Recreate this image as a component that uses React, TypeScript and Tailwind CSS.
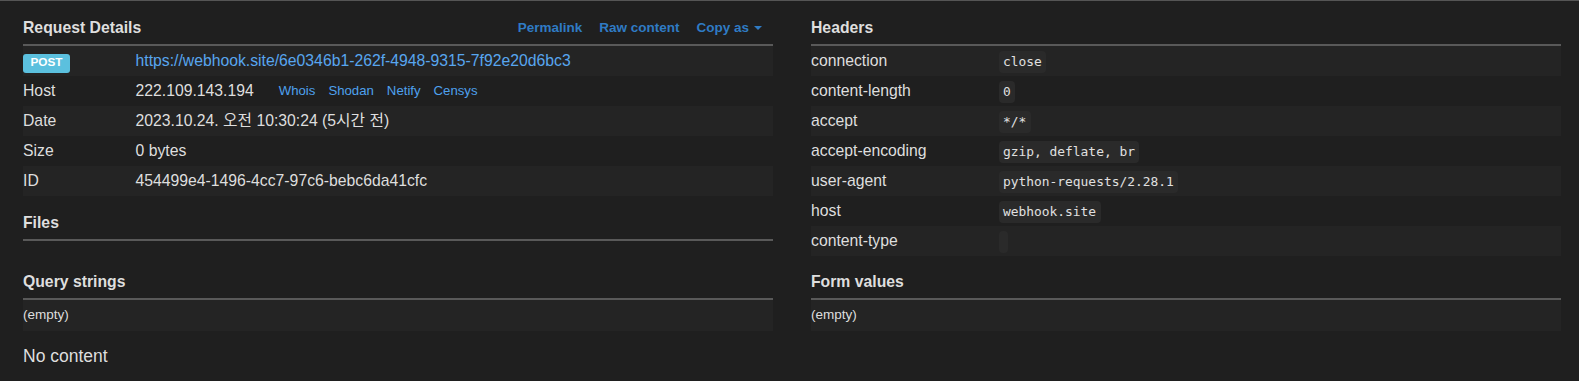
import React from "react";

const sans = { fontFamily: '"Liberation Sans", Arial, "Noto Sans CJK KR", sans-serif' };

interface Row {
  label: React.ReactNode;
  value: React.ReactNode;
}

function SectionHeading({ title, right }: { title: string; right?: React.ReactNode }) {
  return (
    <div className="flex items-start justify-between h-[45px] pt-[18px] border-b-2 border-[#595959]">
      <h3 className="text-[15.75px] leading-[18px] font-bold text-[#dedede]">{title}</h3>
      {right}
    </div>
  );
}

function DataTable({ rows, labelWidth }: { rows: Row[]; labelWidth: string }) {
  return (
    <div className="flex flex-col">
      {rows.map((r, i) => (
        <div
          key={i}
          className={`flex items-center h-[30px] text-[15.75px] text-[#dedede] ${i % 2 === 0 ? "bg-[#242424]" : ""}`}
        >
          <div className={`${labelWidth} shrink-0`}>{r.label}</div>
          <div className="flex items-center min-w-0">{r.value}</div>
        </div>
      ))}
    </div>
  );
}

function Code({ children }: { children?: React.ReactNode }) {
  return (
    <code
      className="inline-block h-[22px] leading-[22px] px-[4.5px] mt-[2px] rounded-[4px] bg-[#2a2a2a] text-[12.9px] text-[#e0e0e0]"
      style={{ fontFamily: '"DejaVu Sans Mono", "Liberation Mono", monospace' }}
    >
      {children}
    </code>
  );
}

function EmptyRow() {
  return (
    <div className="flex items-center h-[31px] bg-[#242424] text-[13.5px] text-[#dedede]">(empty)</div>
  );
}

export default function App() {
  const requestRows: Row[] = [
    {
      label: (
        <span className="inline-flex items-center justify-center w-[47px] h-[19px] mt-[3px] rounded-[3px] bg-[#5bc0de] text-white text-[11.8px] font-bold">
          POST
        </span>
      ),
      value: (
        <a className="text-[#58a6ef]" href="#">
          https://webhook.site/6e0346b1-262f-4948-9315-7f92e20d6bc3
        </a>
      ),
    },
    {
      label: "Host",
      value: (
        <>
          <span>222.109.143.194</span>
          <span className="flex gap-[13px] ml-[25px] text-[13.2px] text-[#4ea1ee]">
            <a href="#">Whois</a>
            <a href="#">Shodan</a>
            <a href="#">Netify</a>
            <a href="#">Censys</a>
          </span>
        </>
      ),
    },
    { label: "Date", value: "2023.10.24. 오전 10:30:24 (5시간 전)" },
    { label: "Size", value: "0 bytes" },
    { label: "ID", value: "454499e4-1496-4cc7-97c6-bebc6da41cfc" },
  ];

  const headerRows: Row[] = [
    { label: "connection", value: <Code>close</Code> },
    { label: "content-length", value: <Code>0</Code> },
    { label: "accept", value: <Code>*/*</Code> },
    { label: "accept-encoding", value: <Code>gzip, deflate, br</Code> },
    { label: "user-agent", value: <Code>python-requests/2.28.1</Code> },
    { label: "host", value: <Code>webhook.site</Code> },
    { label: "content-type", value: <Code /> },
  ];

  const links = (
    <div className="flex items-center gap-[17px] pr-[11px] text-[13.5px] leading-[18px] font-bold text-[#2f7bc4]">
      <a href="#">Permalink</a>
      <a href="#">Raw content</a>
      <a href="#" className="flex items-center gap-[5px]">
        Copy as
        <span className="w-0 h-0 border-l-[4px] border-r-[4px] border-t-[4px] border-l-transparent border-r-transparent border-t-[#2f7bc4]" />
      </a>
    </div>
  );

  return (
    <div className="min-h-screen bg-[#1f1f1f] border-t border-[#555555] pl-[23px] pr-[18px]" style={sans}>
      <div className="grid grid-cols-2 gap-x-[38px]">
        <div>
          <SectionHeading title="Request Details" right={links} />
          <DataTable rows={requestRows} labelWidth="w-[15%]" />
          <SectionHeading title="Files" />
        </div>
        <div>
          <SectionHeading title="Headers" />
          <DataTable rows={headerRows} labelWidth="w-[25%]" />
        </div>
      </div>
      <div className="grid grid-cols-2 gap-x-[38px] -mt-[1px]">
        <div>
          <SectionHeading title="Query strings" />
          <EmptyRow />
        </div>
        <div>
          <SectionHeading title="Form values" />
          <EmptyRow />
        </div>
      </div>
      <p className="mt-[12px] text-[17.5px] text-[#dedede]">No content</p>
    </div>
  );
}
